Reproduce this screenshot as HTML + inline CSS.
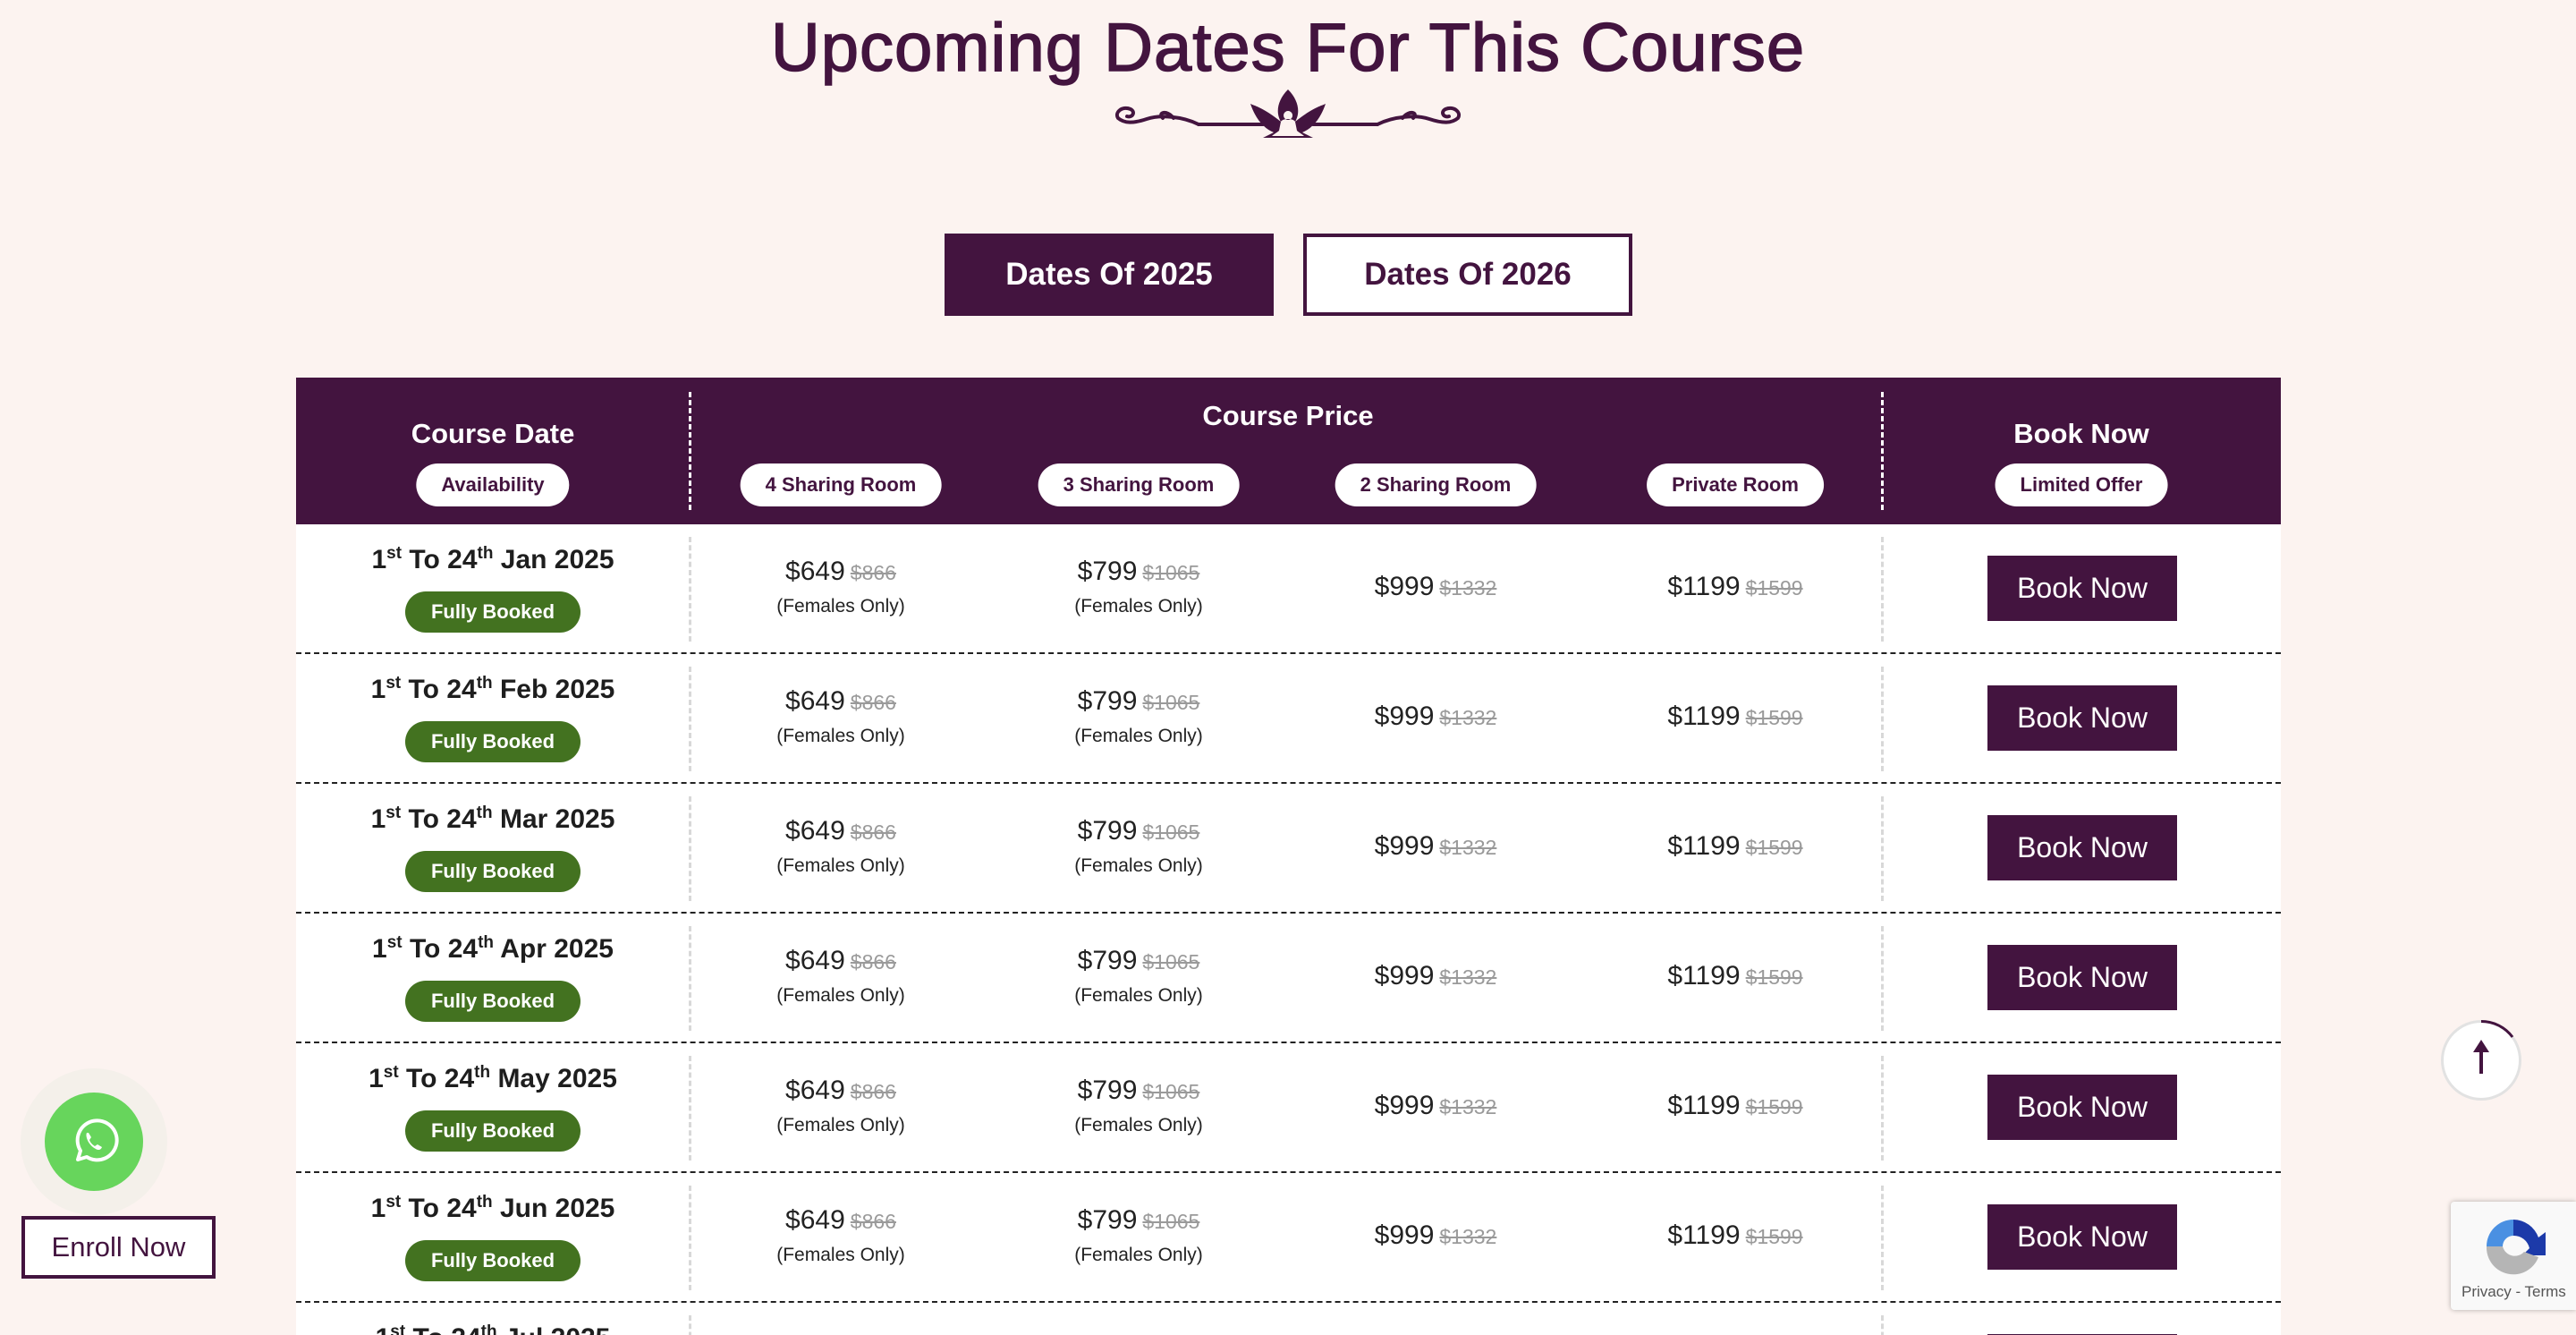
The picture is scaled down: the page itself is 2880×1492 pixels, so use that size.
<!DOCTYPE html>
<html><head><meta charset="utf-8"><style>
*{margin:0;padding:0;box-sizing:border-box}
html,body{width:2880px;height:1492px;overflow:hidden}
body{background:#fcf3f0;font-family:"Liberation Sans",sans-serif;color:#43143f;position:relative}
.abs{position:absolute}
h1{position:absolute;left:0;width:2880px;top:10px;text-align:center;font-size:76px;font-weight:normal;color:#43143f;letter-spacing:1px;-webkit-text-stroke:1.5px #43143f}
.tab{position:absolute;top:261px;height:92px;width:368px;font-size:35px;display:flex;align-items:center;justify-content:center;font-weight:bold}
.table{position:absolute;left:331px;top:422px;width:2219px;height:1070px;background:#fff;overflow:hidden}
.head{position:absolute;left:0;top:0;width:2219px;height:164px;background:#43143f;color:#fff}
.ht{position:absolute;font-size:31px;font-weight:bold;text-align:center;transform:translateX(-50%);white-space:nowrap}
.pill{position:absolute;top:96px;height:48px;background:#fff;color:#43143f;border-radius:24px;font-size:22px;font-weight:bold;display:flex;align-items:center;justify-content:center;transform:translateX(-50%);padding:0 28px;white-space:nowrap}
.vd{position:absolute;width:0;border-left:3px dashed}
.row{position:absolute;left:0;width:2219px;height:145px;border-bottom:2.5px dashed #222}
.c{position:absolute;transform:translateX(-50%);text-align:center;white-space:nowrap;color:#222}
.date{top:22px;font-size:30px;font-weight:bold;color:#1e1e1e}
.date sup{font-size:19px}
.fb{position:absolute;top:75px;left:454px;transform:translateX(-50%);width:196px;height:46px;border-radius:23px;background:#437220;color:#fff;font-size:22px;font-weight:bold;display:flex;align-items:center;justify-content:center}
.pr{font-size:30px}
.pr s{font-size:23px;color:#9a9a9a;margin-left:6px}
.fo{font-size:21px}
.bn{position:absolute;left:1891px;top:35px;width:212px;height:73px;background:#43143f;color:#fff;font-size:32px;display:flex;align-items:center;justify-content:center}
</style></head><body>
<h1>Upcoming Dates For This Course</h1>
<svg class="abs" style="left:1242px;top:100px" width="396" height="60" viewBox="0 0 396 60">
<g fill="none" stroke="#43143f" stroke-width="4" stroke-linecap="round">
<path d="M98 39 H170 M226 39 H298"/>
<path d="M98 39 C80 30 55 28 40 33 C25 38 15 38 8 32 C4 26 12 18 22 22 C28 25 24 32 18 30"/>
<path d="M298 39 C316 30 341 28 356 33 C371 38 381 38 388 32 C392 26 384 18 374 22 C368 25 372 32 378 30"/>
<path d="M70 32 C62 22 52 26 58 32"/><path d="M326 32 C334 22 344 26 338 32"/>
</g>
<path fill="#43143f" d="M198 0 C186 12 184 26 190 36 C170 20 160 18 156 16 C162 34 172 44 182 48 L170 54 L226 54 L214 48 C224 44 234 34 240 16 C236 18 226 20 206 36 C212 26 210 12 198 0Z"/>
<path fill="#fcf3f0" d="M198 24 a5 5 0 1 0 0.1 0Z M190 36 C192 32 204 32 206 36 L208 46 C210 48 214 50 216 52 L180 52 C182 50 186 48 188 46Z"/>
</svg>
<div class="tab" style="left:1056px;background:#43143f;color:#fff">Dates Of 2025</div>
<div class="tab" style="left:1457px;border:4px solid #43143f;background:#fff;color:#43143f">Dates Of 2026</div>

<div class="table">
<div class="head">
<div class="ht" style="left:220px;top:45px">Course Date</div>
<div class="pill" style="left:220px">Availability</div>
<div class="vd" style="left:439px;top:16px;height:132px;border-color:#fff"></div>
<div class="ht" style="left:1109px;top:25px">Course Price</div>
<div class="pill" style="left:609px">4 Sharing Room</div>
<div class="pill" style="left:942px">3 Sharing Room</div>
<div class="pill" style="left:1274px">2 Sharing Room</div>
<div class="pill" style="left:1609px">Private Room</div>
<div class="vd" style="left:1772px;top:16px;height:132px;border-color:#fff"></div>
<div class="ht" style="left:1996px;top:45px">Book Now</div>
<div class="pill" style="left:1996px">Limited Offer</div>
</div>
<div id="rows"></div>
</div>

<script>
var m=["Jan","Feb","Mar","Apr","May","Jun","Jul"],h="";
for(var i=0;i<7;i++){var t=164+i*145;
h+='<div class="row" style="top:'+t+'px">'+
'<div class="c date" style="left:220px">1<sup>st</sup> To 24<sup>th</sup> '+m[i]+' 2025</div>'+
'<div class="fb" style="left:220px">Fully Booked</div>'+
'<div class="vd" style="left:439px;top:14px;height:117px;border-color:#d8d8d8"></div>'+
'<div class="c pr" style="left:609px;top:36px">$649<s>$866</s></div><div class="c fo" style="left:609px;top:80px">(Females Only)</div>'+
'<div class="c pr" style="left:942px;top:36px">$799<s>$1065</s></div><div class="c fo" style="left:942px;top:80px">(Females Only)</div>'+
'<div class="c pr" style="left:1274px;top:53px">$999<s>$1332</s></div>'+
'<div class="c pr" style="left:1609px;top:53px">$1199<s>$1599</s></div>'+
'<div class="vd" style="left:1772px;top:14px;height:117px;border-color:#d8d8d8"></div>'+
'<div class="bn">Book Now</div></div>';}
document.getElementById("rows").innerHTML=h;
</script>

<div class="abs" style="left:23px;top:1194px;width:164px;height:164px;border-radius:50%;background:#f4f0ea"></div>
<div class="abs" style="left:50px;top:1221px;width:110px;height:110px;border-radius:50%;background:#67d55c"></div>
<svg class="abs" style="left:77px;top:1248px" width="56" height="56" viewBox="0 0 56 56"><path d="M10 48 L13 38 A22 22 0 1 1 20 45 Z" fill="none" stroke="#fff" stroke-width="4" stroke-linejoin="round"/><path d="M20 18 C18 22 22 32 30 36 C33 38 36 37 37 34 L32 31 L29 33 C26 31 24 29 23 26 L25 23 L22 18Z" fill="#fff"/></svg>
<div class="abs" style="left:24px;top:1359px;width:217px;height:70px;border:4px solid #43143f;background:#fff;font-size:31px;display:flex;align-items:center;justify-content:center;color:#43143f">Enroll Now</div>

<div class="abs" style="left:2729px;top:1140px;width:90px;height:90px;border-radius:50%;background:#fff;border:3px solid #e2e2e2"></div>
<svg class="abs" style="left:2729px;top:1140px" width="90" height="90"><path d="M45 1.5 A43.5 43.5 0 0 1 80 19" fill="none" stroke="#43143f" stroke-width="3"/><path d="M45 60 V32" stroke="#43143f" stroke-width="4"/><path d="M36 36 L45 22 L54 36Z" fill="#43143f"/></svg>

<div class="abs" style="left:2740px;top:1343px;width:140px;height:121px;background:#f9f9f9;border-radius:4px 0 0 4px;box-shadow:0 0 6px rgba(0,0,0,.3)"></div>
<svg class="abs" style="left:2772px;top:1355px" width="76" height="76" viewBox="0 0 76 76"><path d="M38 8 A30 30 0 0 0 8 38 H26 A12 12 0 0 1 38 26Z" fill="#4a90e2"/><path d="M38 8 A30 30 0 0 1 66 28 L74 22 V48 H48 L56 40 A18 18 0 0 0 38 26Z" fill="#1c3aa9"/><path d="M8 38 A30 30 0 0 0 66 50 L50 44 A14 14 0 0 1 26 38Z" fill="#b5b5b5"/></svg>
<div class="abs" style="left:2752px;top:1434px;font-size:17px;color:#555">Privacy - Terms</div>
</body></html>
